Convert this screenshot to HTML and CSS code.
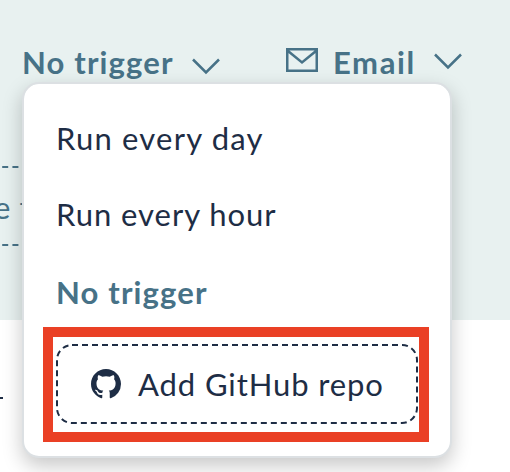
FILE: index.html
```html
<!DOCTYPE html>
<html lang="en">
<head>
<meta charset="utf-8">
<title>Trigger menu</title>
<link rel="stylesheet" href="styles.css">
</head>
<body>
<main class="page">
  <section class="hero">
    <div class="toolbar">
      <div class="control trigger">
        <span class="trigger-label">No trigger</span>
        <svg class="chevron" width="28" height="17" viewBox="0 0 28 17"><path d="M1 1.5 14 14.5 27 1.5"/></svg>
        <div class="menu">
          <div class="item day"><span>Run every day</span></div>
          <div class="item hour"><span>Run every hour</span></div>
          <div class="item selected"><span>No trigger</span></div>
          <div class="highlight">
            <div class="repo">
              <svg class="outline" width="362" height="80" viewBox="0 0 362 80"><rect x="1" y="1" width="360" height="78" rx="15"/></svg>
              <svg class="github" width="30" height="30" viewBox="0 0 16 16"><path d="M8 0C3.58 0 0 3.58 0 8c0 3.54 2.29 6.53 5.47 7.59.4.07.55-.17.55-.38 0-.19-.01-.82-.01-1.49-2.01.37-2.53-.49-2.69-.94-.09-.23-.48-.94-.82-1.13-.28-.15-.68-.52-.01-.53.63-.01 1.08.58 1.23.82.72 1.21 1.87.87 2.33.66.07-.52.28-.87.51-1.07-1.78-.2-3.64-.89-3.64-3.95 0-.87.31-1.59.82-2.15-.08-.2-.36-1.02.08-2.12 0 0 .67-.21 2.2.82.64-.18 1.32-.27 2-.27s1.36.09 2 .27c1.53-1.04 2.2-.82 2.2-.82.44 1.1.16 1.92.08 2.12.51.56.82 1.27.82 2.15 0 3.07-1.87 3.75-3.65 3.95.29.25.54.73.54 1.48 0 1.07-.01 1.93-.01 2.2 0 .21.15.46.55.38A8.01 8.01 0 0 0 16 8c0-4.42-3.58-8-8-8Z"/></svg>
              <span class="repo-label">Add GitHub repo</span>
            </div>
          </div>
        </div>
      </div>
      <div class="control email">
        <svg class="envelope" width="32" height="24" viewBox="0 0 32 24"><path d="M1.25 1.25h29.5v21.5h-29.5zM2 3l14 11.5L30 3"/></svg>
        <span class="email-label">Email</span>
        <svg class="chevron raised" width="28" height="17" viewBox="0 0 28 17"><path d="M1 1.5 14 14.5 27 1.5"/></svg>
      </div>
    </div>
    <div class="step"><span>e</span><span>t</span></div>
  </section>
  <section class="content"><span class="rule"></span></section>
</main>
</body>
</html>
```
FILE: styles.css
```css
* { box-sizing: border-box; }
body { margin: 0; background: #fff; color: #1e2d45; font: 31px/40px Lato, "Liberation Sans", sans-serif; }
.page { height: 472px; overflow: hidden; }
.hero { height: 320px; padding-top: 42px; background: #e8f1f0; }
.toolbar { display: flex; height: 124px; align-items: flex-start; padding-left: 22px; color: #477287; font-weight: 700; }
.control { display: flex; align-items: center; height: 40px; white-space: nowrap; }
.trigger { position: relative; width: 264px; }
.trigger-label { width: 170px; letter-spacing: 1.15px; }
.chevron { fill: none; stroke: #477287; stroke-width: 2.5; margin-top: 8px; }
.raised { margin-top: -1px; }
.envelope { fill: none; stroke: #477287; stroke-width: 2.5; margin-top: -4px; }
.email-label { width: 101px; margin-left: 15px; letter-spacing: 1.6px; }
.menu { position: absolute; z-index: 2; left: 0; top: 40px; width: 430px; height: 376px; padding: 34px 21px 0 19px; border: 2px solid #dce0e3; border-radius: 17px; background: #fff; background-clip: padding-box; box-shadow: 0 8px 20px rgba(0,0,0,.22); color: #1e2d45; font-weight: 400; }
.item { height: 40px; margin: 0 0 36px 13px; }
.hour { margin-bottom: 38px; }
.selected { margin-bottom: 15px; color: #477287; font-weight: 700; letter-spacing: 1.15px; }
.day { letter-spacing: 1.2px; }
.hour { letter-spacing: .95px; }
.highlight { width: 386px; height: 115px; border: 10px solid #ea4025; padding: 7px 0 0 3px; }
.repo { position: relative; display: flex; align-items: center; width: 362px; height: 80px; padding-left: 35px; }
.outline { position: absolute; inset: 0; fill: none; stroke: #1e2d45; stroke-width: 2; stroke-dasharray: 6 4; }
.github { fill: #1e2d45; }
.repo-label { margin-left: 17px; letter-spacing: .9px; }
.step { display: flex; gap: 9px; width: 200px; height: 80px; margin-left: -8px; padding: 19px 0 0 2px; color: #477287; border-top: 2px dashed #477287; border-bottom: 2px dashed #477287; }
.content { height: 152px; padding-top: 77px; }
.rule { display: block; width: 3px; height: 2px; background: #1e2d45; }
```
